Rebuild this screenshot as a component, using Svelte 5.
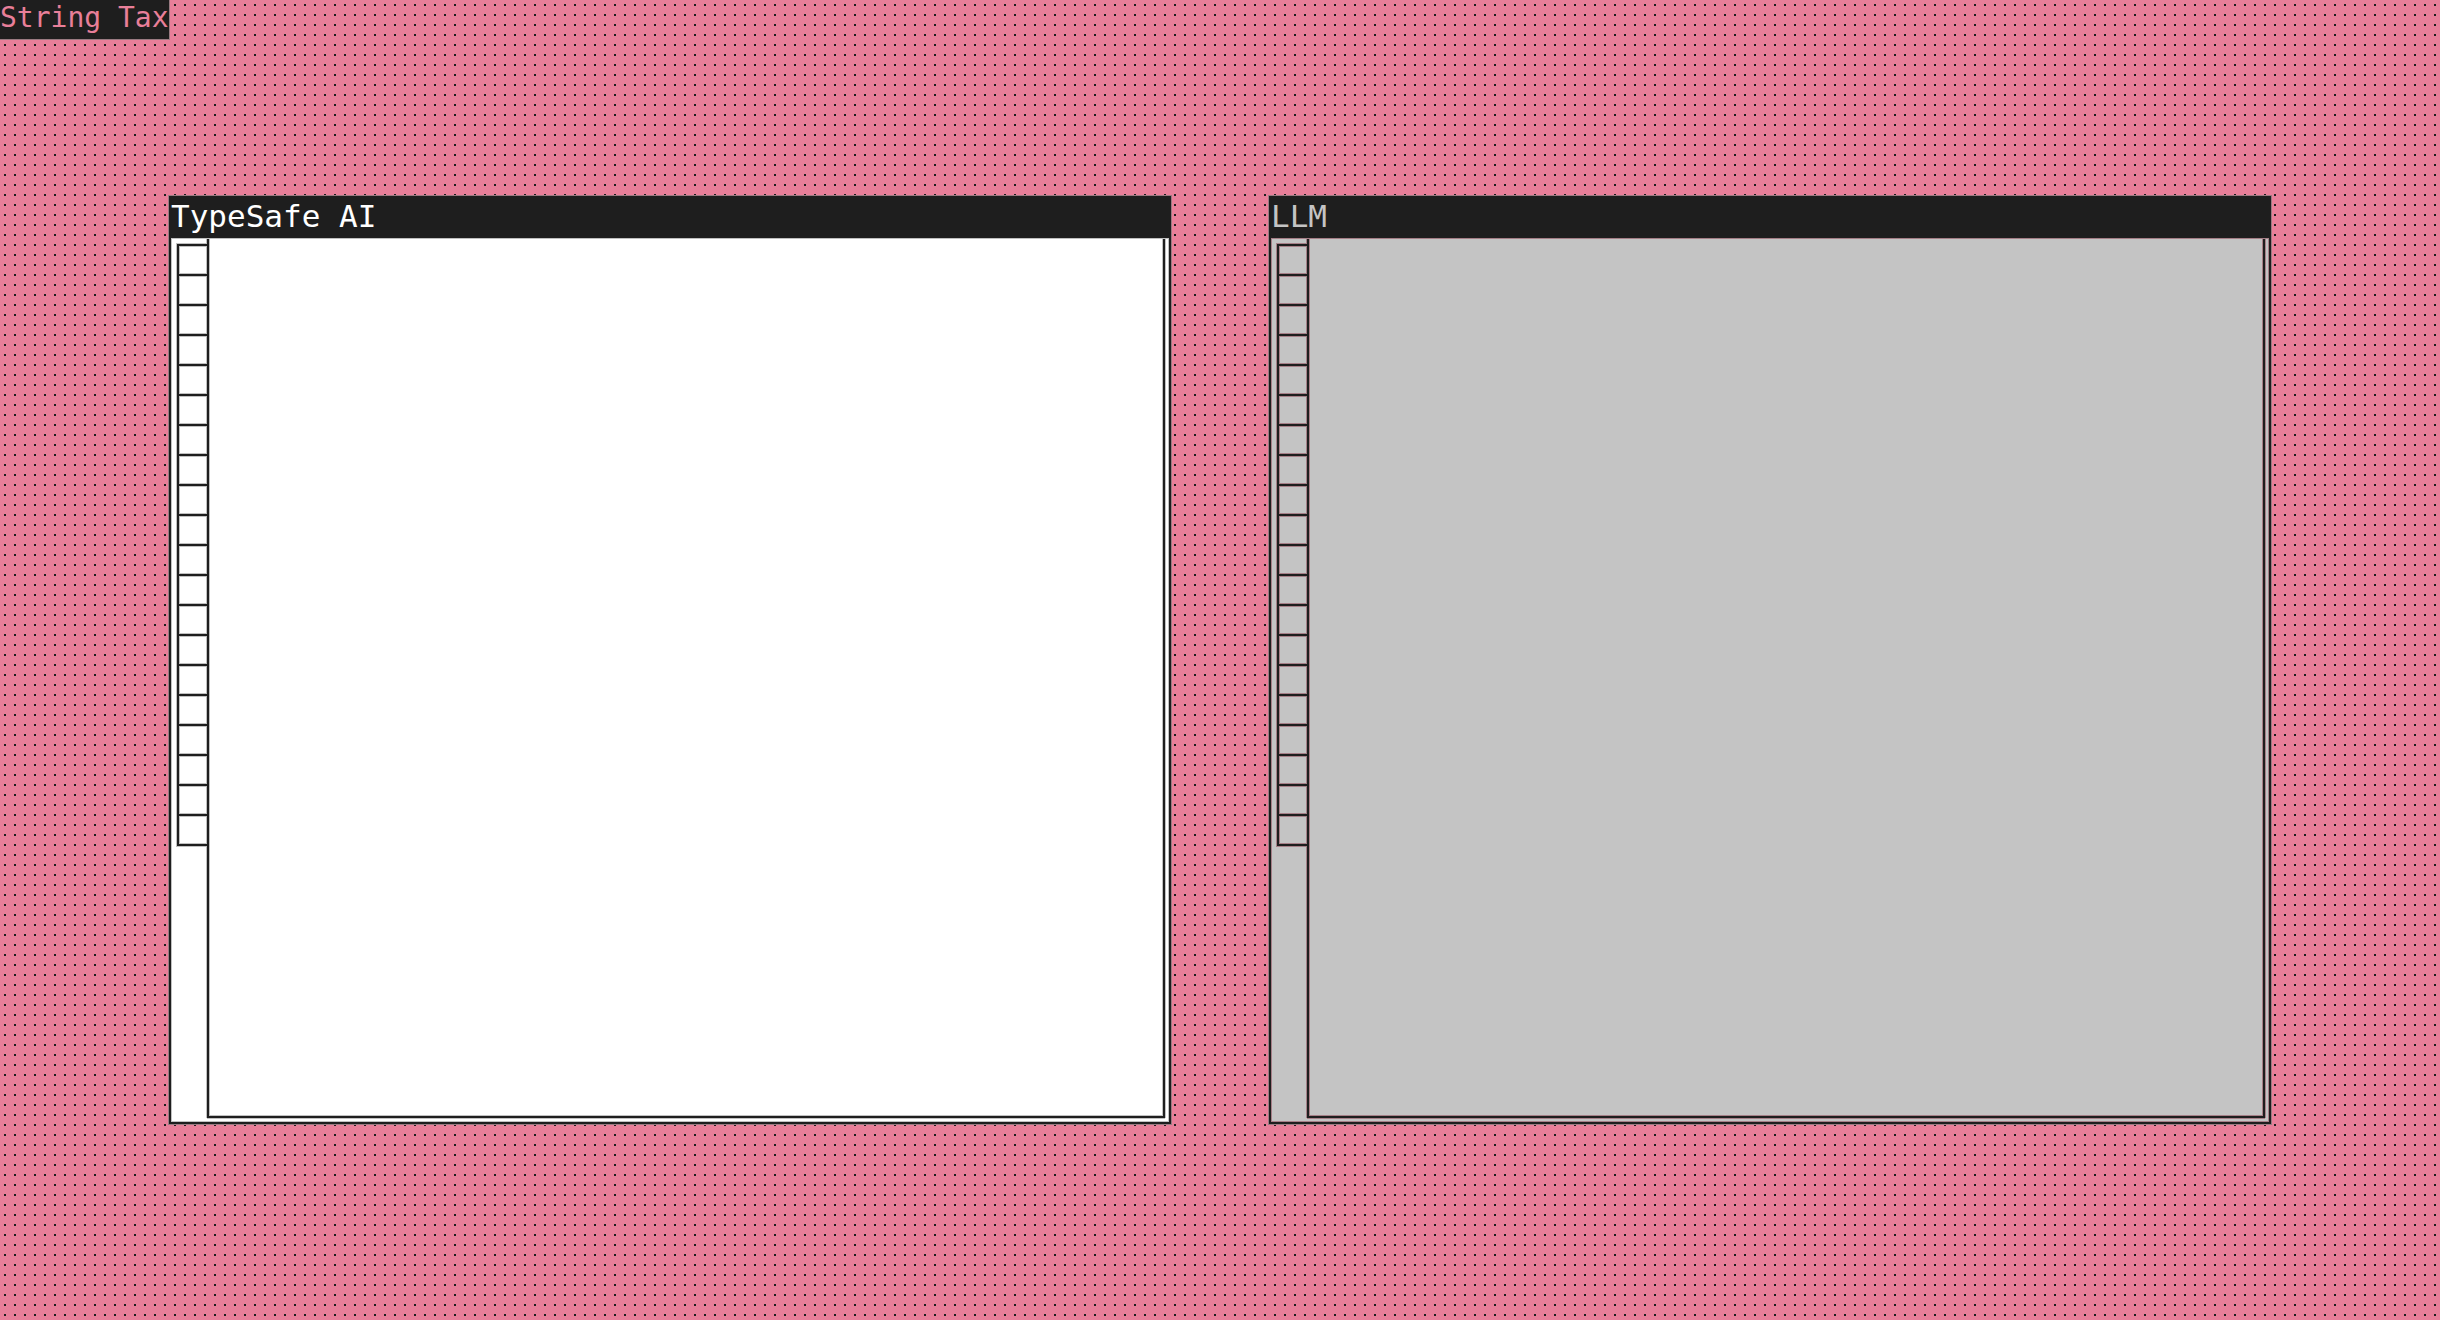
<script lang="ts">
	type Pane = { title: string; muted: boolean };

	const cellCount = 20;
	const panes: Pane[] = [
		{ title: "TypeSafe AI", muted: false },
		{ title: "LLM", muted: true },
	];
</script>

<main class="desktop">
	<h1 class="app-title">String Tax</h1>
	<div class="panes">
		{#each panes as pane}
			<section class="pane" class:muted={pane.muted}>
				<h2 class="pane-title">{pane.title}</h2>
				<div class="pane-body">
					<div class="cells">
						{#each Array(cellCount) as _}
							<div class="cell"></div>
						{/each}
					</div>
					<div class="canvas"></div>
				</div>
			</section>
		{/each}
	</div>
</main>

<style>
	:global(body) {
		background-color: #e87f99;
	}
	.desktop {
		--ink: #1e1e1e;
		--paper: #ffffff;
		--halo: #c0c0c0;
		--edge: #9a7b82;
		position: relative;
		display: flex;
		align-items: center;
		min-height: 100vh;
		box-sizing: border-box;
		padding: 0 169px;
		/* 2px dot in the middle of every 10px tile */
		background-image: url("data:image/svg+xml,%3Csvg xmlns='http://www.w3.org/2000/svg' width='10' height='10'%3E%3Crect x='4' y='4' width='2' height='2' fill='%231e1e1e'/%3E%3C/svg%3E");
		font-family: "DejaVu Sans Mono", monospace;
	}
	.app-title {
		position: absolute;
		top: 0;
		left: 0;
		margin: 0;
		padding-bottom: 3px;
		background: var(--ink);
		box-shadow: 0 0 0 1px var(--edge);
		color: #e87f99;
		font-size: 28px;
		font-weight: 400;
		line-height: 36px;
	}
	.panes {
		display: flex;
		flex: 1;
		gap: 98px;
	}
	.pane {
		display: flex;
		flex: 1;
		flex-direction: column;
		box-sizing: border-box;
		height: calc(100vh - 392px);
		border: 2px solid var(--ink);
		background: var(--paper);
		box-shadow: 0 0 0 1px var(--edge), inset 0 0 0 1px var(--halo);
	}
	.pane.muted {
		--paper: #c4c4c4;
		--halo: #a57f87;
	}
	.pane-title {
		margin: 0;
		padding-bottom: 4px;
		background: var(--ink);
		border-bottom: 1px solid var(--halo);
		color: var(--paper);
		font-size: 31px;
		font-weight: 400;
		line-height: 36px;
	}
	.pane-body {
		display: flex;
		flex: 1;
		align-items: flex-start;
		padding: 0 4px 4px 6px;
	}
	.cells {
		position: relative;
		margin-top: 5px;
		box-shadow: -1px -1px 0 0 var(--halo), -1px 1px 0 0 var(--halo);
	}
	.cell {
		box-sizing: border-box;
		width: 30px;
		height: 30px;
		border: 2px solid var(--ink);
		border-width: 2px 0 0 2px;
		background: var(--paper);
		box-shadow: inset 0 0 0 1px var(--halo);
	}
	.cell:last-child {
		height: 32px;
		border-bottom-width: 2px;
	}
	.canvas {
		flex: 1;
		align-self: stretch;
		border: 2px solid var(--ink);
		border-top: none;
		box-shadow: 0 1px 0 0 var(--halo), -1px 0 0 0 var(--halo), 1px 0 0 0 var(--halo), inset 1px 0 0 0 var(--halo), inset -1px -1px 0 0 var(--halo);
	}
</style>
